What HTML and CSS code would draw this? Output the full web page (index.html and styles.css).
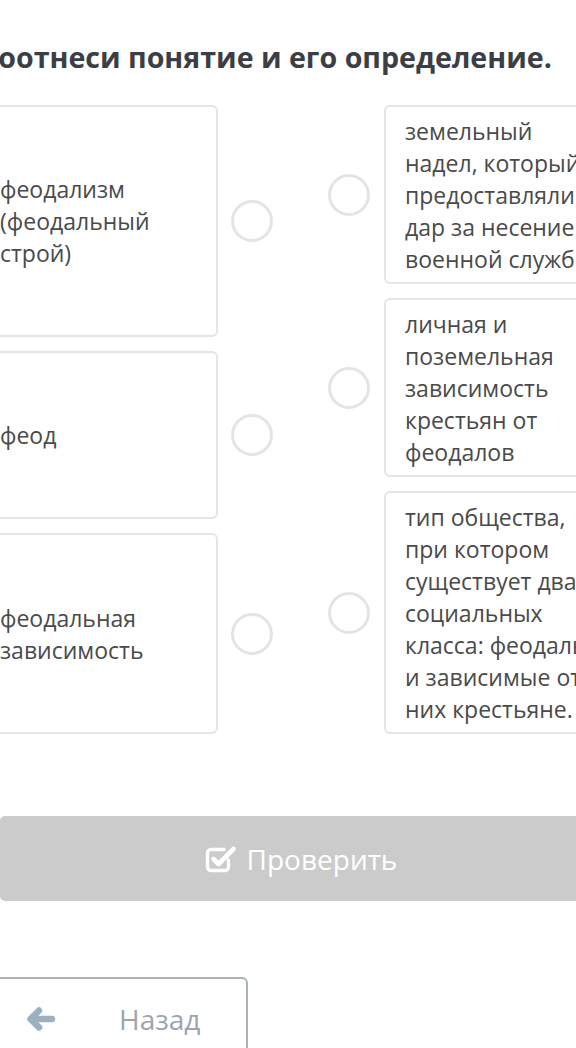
FILE: index.html
```html
<!DOCTYPE html>
<html lang="ru">
<head>
<meta charset="utf-8">
<link rel="stylesheet" href="styles.css">
</head>
<body>
<div class="page">
  <h1 class="title">Соотнеси понятие и его определение.</h1>
  <div class="match">
    <div class="col col-left">
      <div class="row">
        <div class="card card-left h1">феодализм (феодальный строй)</div>
        <span class="dot"></span>
      </div>
      <div class="row">
        <div class="card card-left h2">феод</div>
        <span class="dot"></span>
      </div>
      <div class="row">
        <div class="card card-left h3">феодальная зависимость</div>
        <span class="dot"></span>
      </div>
    </div>
    <div class="col col-right">
      <div class="row">
        <span class="dot"></span>
        <div class="card card-right">земельный надел, который предоставляли в дар за несение военной службы</div>
      </div>
      <div class="row">
        <span class="dot"></span>
        <div class="card card-right">личная и поземельная зависимость крестьян от феодалов</div>
      </div>
      <div class="row">
        <span class="dot"></span>
        <div class="card card-right">тип общества, при котором существует два социальных класса: феодалы и зависимые от них крестьяне.</div>
      </div>
    </div>
  </div>
  <button class="check" type="button">
    <svg class="check-icon" viewBox="0 0 32 30" width="32" height="30" aria-hidden="true">
      <path d="M23.5 16v7a3.5 3.5 0 0 1-3.5 3.5H6A3.5 3.5 0 0 1 2.5 23V9A3.5 3.5 0 0 1 6 5.5h13" fill="none" stroke="#fff" stroke-width="3.4" stroke-linecap="round" stroke-linejoin="round"/>
      <path d="M8.5 15l5 5L28.5 5" fill="none" stroke="#fff" stroke-width="4.6" stroke-linecap="round" stroke-linejoin="round"/>
    </svg>
    <span>Проверить</span>
  </button>
  <button class="back" type="button">
    <svg class="back-icon" viewBox="0 0 30 24" width="30" height="24" aria-hidden="true">
      <path d="M13 3.5L4.5 12l8.5 8.5M6 12h20" fill="none" stroke="#9cb1c0" stroke-width="6.5" stroke-linecap="round" stroke-linejoin="round"/>
    </svg>
    <span class="back-text">Назад</span>
  </button>
</div>
</body>
</html>
```

FILE: styles.css
```css
html, body {
  margin: 0;
  padding: 0;
  background: #ffffff;
  overflow: hidden;
}

body {
  width: 576px;
  height: 1048px;
  font-family: "Open Sans", "Liberation Sans", sans-serif;
}

.page {
  width: 626px;
  margin-left: -22px;
  padding-top: 38px;
}

.title {
  margin: 0 0 30px 2px;
  font-size: 28.6px;
  line-height: 37px;
  font-weight: 700;
  color: #3b3e44;
  white-space: nowrap;
}

.match {
  display: flex;
  gap: 55px;
  align-items: flex-start;
}

.col {
  display: flex;
  flex-direction: column;
  gap: 14px;
}

.row {
  display: flex;
  align-items: center;
  gap: 13px;
}

.col-right .row {
  gap: 14px;
}

.card {
  box-sizing: border-box;
  border: 2px solid #e3e5e8;
  border-radius: 6px;
  background: #fff;
  font-size: 23px;
  line-height: 32px;
  color: #4a4a4a;
}

.card-left {
  width: 240px;
  padding: 0 20px;
  display: flex;
  align-items: center;
}

.h1 { height: 232px; }
.h2 { height: 168px; }
.h3 { height: 201px; }

.card-right {
  width: 240px;
  padding: 8px 23px 7px 19px;
}

.dot {
  flex: none;
  box-sizing: border-box;
  width: 42px;
  height: 42px;
  border: 3px solid #e2e4e6;
  border-radius: 50%;
}

.check {
  display: flex;
  align-items: center;
  justify-content: center;
  gap: 10px;
  box-sizing: border-box;
  width: 602px;
  height: 85px;
  margin: 82px 0 0 22px;
  border: 0;
  border-radius: 5px;
  background: #cbcbcb;
  color: #ffffff;
  font-family: "Open Sans", "Liberation Sans", sans-serif;
  font-size: 28px;
  padding: 0;
}

.check-icon {
  display: block;
}

.back {
  display: flex;
  align-items: center;
  box-sizing: border-box;
  width: 270px;
  height: 100px;
  margin-top: 76px;
  padding: 0 0 16px 46px;
  border: 2px solid #a9b3b9;
  border-radius: 6px;
  background: #fff;
  font-family: "Open Sans", "Liberation Sans", sans-serif;
  font-size: 28px;
  color: #9aa5ad;
}

.back-icon {
  display: block;
}

.back-text {
  margin-left: 63px;
}
```
